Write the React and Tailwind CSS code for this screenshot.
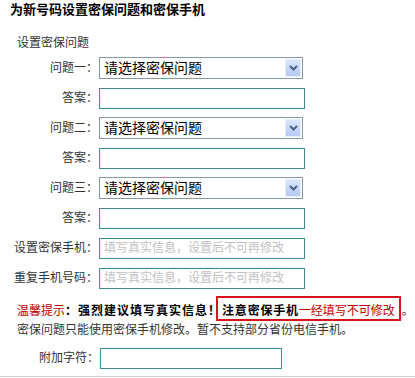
import React from 'react'

const FONT = { fontFamily: '"Liberation Sans", "Noto Sans CJK SC", sans-serif' }

function SelectBox() {
  return (
    <div className="w-[204px] h-[22px] border border-[#8797a8] bg-white flex items-center justify-between">
      <span className="pl-[4px] text-[14px] leading-[20px] text-black">请选择密保问题</span>
      <span className="mr-[1px] w-[16px] h-[18px] flex items-center justify-center border border-[#e6eefc] bg-gradient-to-b from-[#dbe6fb] to-[#b5c9f3]">
        <svg width="9" height="6" viewBox="0 0 9 6">
          <path d="M1 1 L4.5 4.5 L8 1" fill="none" stroke="#4d6185" strokeWidth="2" />
        </svg>
      </span>
    </div>
  )
}

function TextBox({ placeholder, w = 'w-[206px]' }) {
  return (
    <div className={`${w} h-[21px] border border-[#3b8d96] bg-white flex items-center pl-[4px]`}>
      {placeholder && <span className="text-[12px] text-[#c2c2c2] leading-[16px]">{placeholder}</span>}
    </div>
  )
}

function Row({ label, children }) {
  return (
    <div className="h-[30px] flex items-center">
      <div className="w-[88px] text-right text-[12px] text-[#333]">{label}</div>
      <div className="ml-[1px]">{children}</div>
    </div>
  )
}

export default function App() {
  const rows = [
    ['问题一：', <SelectBox />],
    ['答案：', <TextBox />],
    ['问题二：', <SelectBox />],
    ['答案：', <TextBox />],
    ['问题三：', <SelectBox />],
    ['答案：', <TextBox />],
    ['设置密保手机：', <TextBox placeholder="填写真实信息，设置后不可再修改" />],
    ['重复手机号码：', <TextBox placeholder="填写真实信息，设置后不可再修改" />],
  ]
  return (
    <div className="w-[415px] h-[378px] bg-white pl-[10px] overflow-hidden" style={FONT}>
      <h1 className="h-[20px] leading-[20px] text-[13px] font-bold text-black">为新号码设置密保问题和密保手机</h1>
      <div className="mt-[13px] h-[20px] leading-[20px] pl-[7px] text-[12px] text-[#333]">设置密保问题</div>

      {rows.map(([label, el], i) => (
        <Row key={i} label={label}>{el}</Row>
      ))}

      {/* 提示 */}
      <div className="mt-[9px] pl-[7px] text-[12px] leading-[19px] text-[#333]">
        <div className="whitespace-nowrap">
          <span className="text-[#c00000]">温馨提示</span>
          <span className="font-bold text-black tracking-[1px]">：强烈建议填写真实信息！</span>
          <span className="relative ml-[1px]">
            <span className="absolute -left-[6px] -right-[6px] -top-[8px] -bottom-[3px] border-2 border-[#d8141c]"></span>
            <span className="font-bold text-black tracking-[0.8px]">注意密保手机</span>
            <span className="text-[#c00000]">一经填写不可修改</span>
          </span>
          <span className="ml-[7px]">。</span>
        </div>
        <div className="whitespace-nowrap">密保问题只能使用密保手机修改。暂不支持部分省份电信手机。</div>
      </div>

      <div className="mt-[3px] h-[30px] flex items-center">
        <div className="w-[89px] text-right text-[12px] text-[#333]">附加字符：</div>
        <div className="ml-[1px]"><TextBox w="w-[182px]" /></div>
      </div>
      <div className="mt-[3px] -ml-[10px] border-t border-[#cfcfcf]"></div>
    </div>
  )
}
